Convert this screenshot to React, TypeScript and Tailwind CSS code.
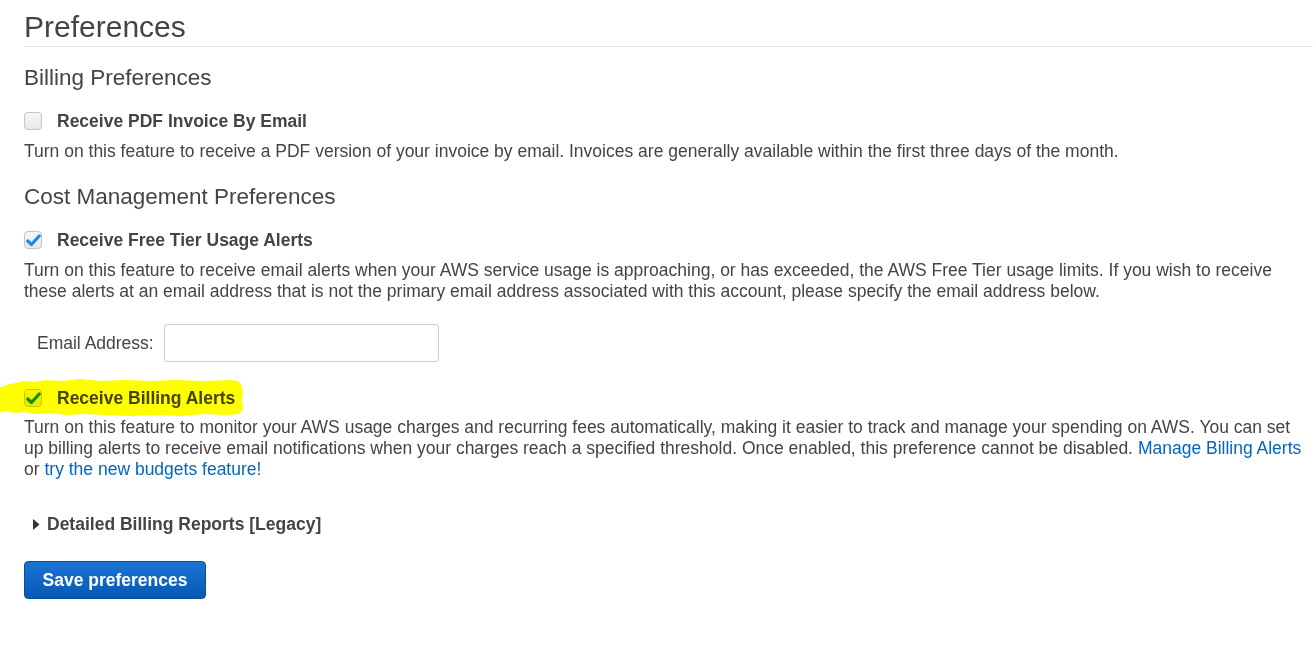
import React, { useState } from 'react';

const Checkbox: React.FC<{ checked: boolean; onChange: () => void }> = ({ checked, onChange }) => (
  <button
    type="button"
    onClick={onChange}
    className="w-[18px] h-[18px] rounded-[4px] border border-[#c4c4c4] bg-gradient-to-b from-[#f7f7f7] to-[#e8e8e8] flex items-center justify-center shrink-0"
  >
    {checked && (
      <svg width="15" height="13" viewBox="0 0 15 13">
        <path d="M1.8 7 L5.5 10.5 L13.2 2" fill="none" stroke="#1b8ae0" strokeWidth="3.2" strokeLinecap="round" strokeLinejoin="round" />
      </svg>
    )}
  </button>
);

const App: React.FC = () => {
  const [pdfInvoice, setPdfInvoice] = useState(false);
  const [freeTier, setFreeTier] = useState(true);
  const [billingAlerts, setBillingAlerts] = useState(true);
  const [email, setEmail] = useState('');
  const [showLegacy, setShowLegacy] = useState(false);

  return (
    <div className="min-h-screen bg-white pl-6 text-[#444] font-['Liberation_Sans',Arial,sans-serif]">
      {/* Header */}
      <h1 className="pt-[10px] pb-[3px] text-[30px] leading-[33px] font-normal border-b border-[#e3e3e3]">Preferences</h1>

      {/* Billing */}
      <h2 className="mt-[18px] text-[22.5px] leading-[26px] font-normal">Billing Preferences</h2>
      <div className="mt-[18px] h-[24px] flex items-center">
        <Checkbox checked={pdfInvoice} onChange={() => setPdfInvoice(!pdfInvoice)} />
        <span className="ml-[15px] text-[17.5px] font-bold">Receive PDF Invoice By Email</span>
      </div>
      <p className="mt-[8px] text-[17.5px] leading-[21px]">
        Turn on this feature to receive a PDF version of your invoice by email. Invoices are generally available within the first three days of the month.
      </p>

      {/* Cost management */}
      <h2 className="mt-[22px] text-[22.5px] leading-[26px] font-normal">Cost Management Preferences</h2>
      <div className="mt-[18px] h-[24px] flex items-center">
        <Checkbox checked={freeTier} onChange={() => setFreeTier(!freeTier)} />
        <span className="ml-[15px] text-[17.5px] font-bold">Receive Free Tier Usage Alerts</span>
      </div>
      <p className="mt-[8px] text-[17.5px] leading-[21px]">
        Turn on this feature to receive email alerts when your AWS service usage is approaching, or has exceeded, the AWS Free Tier usage limits. If you wish to receive these alerts at an email address that is not the primary email address associated with this account, please specify the email address below.
      </p>
      <div className="mt-[22px] pl-[13px] flex items-center gap-[10px]">
        <label className="text-[17.5px]">Email Address:</label>
        <input
          value={email}
          onChange={(e) => setEmail(e.target.value)}
          className="w-[275px] h-[38px] rounded-[3px] border border-[#ccc] px-2 text-[17.5px] outline-none"
        />
      </div>

      <div className="relative mt-[24px] h-[24px] flex items-center">
        {/* marker highlight */}
        <svg
          className="absolute left-[-24px] top-[-8px] pointer-events-none mix-blend-multiply"
          width="245"
          height="42"
          viewBox="0 0 245 42"
        >
          <path
            d="M0 9 L5 8 L9 6 L16 5 L22 3 L34 4 L46 2 L62 3 L80 1 L100 3 L124 2 L150 3 L176 2 L204 3 L228 2 L238 3 L241 6 L243 14 L242 24 L243 32 L239 36 L226 37 L206 36 L180 38 L156 37 L128 38 L104 37 L84 36 L66 37 L50 35 L36 36 L24 34 L14 35 L6 33 L0 34 Z"
            fill="#ffff00"
          />
        </svg>
        <Checkbox checked={billingAlerts} onChange={() => setBillingAlerts(!billingAlerts)} />
        <span className="ml-[15px] text-[17.5px] font-bold">Receive Billing Alerts</span>
      </div>
      <p className="mt-[7px] text-[17.5px] leading-[21px]">
        Turn on this feature to monitor your AWS usage charges and recurring fees automatically, making it easier to track and manage your spending on AWS. You can set up billing alerts to receive email notifications when your charges reach a specified threshold. Once enabled, this preference cannot be disabled.{' '}
        <a href="#" className="text-[#0066c0]">Manage Billing Alerts</a> or{' '}
        <a href="#" className="text-[#0066c0]">try the new budgets feature!</a>
      </p>

      {/* Legacy */}
      <button
        type="button"
        onClick={() => setShowLegacy(!showLegacy)}
        className="mt-[32px] h-[24px] flex items-center pl-[9px]"
      >
        <svg width="7" height="11" viewBox="0 0 7 11" className={showLegacy ? 'rotate-90' : ''}>
          <path d="M0 0 L6.5 5.5 L0 11 Z" fill="#333" />
        </svg>
        <span className="ml-[7px] text-[17.5px] font-bold">Detailed Billing Reports [Legacy]</span>
      </button>

      <div className="mt-[25px]">
        <button
          type="button"
          className="w-[182px] h-[38px] rounded-[4px] border border-[#0a4f9e] bg-gradient-to-b from-[#1b74d3] to-[#0659b4] text-white text-[17.5px] font-bold"
        >
          Save preferences
        </button>
      </div>
    </div>
  );
};

export default App;
